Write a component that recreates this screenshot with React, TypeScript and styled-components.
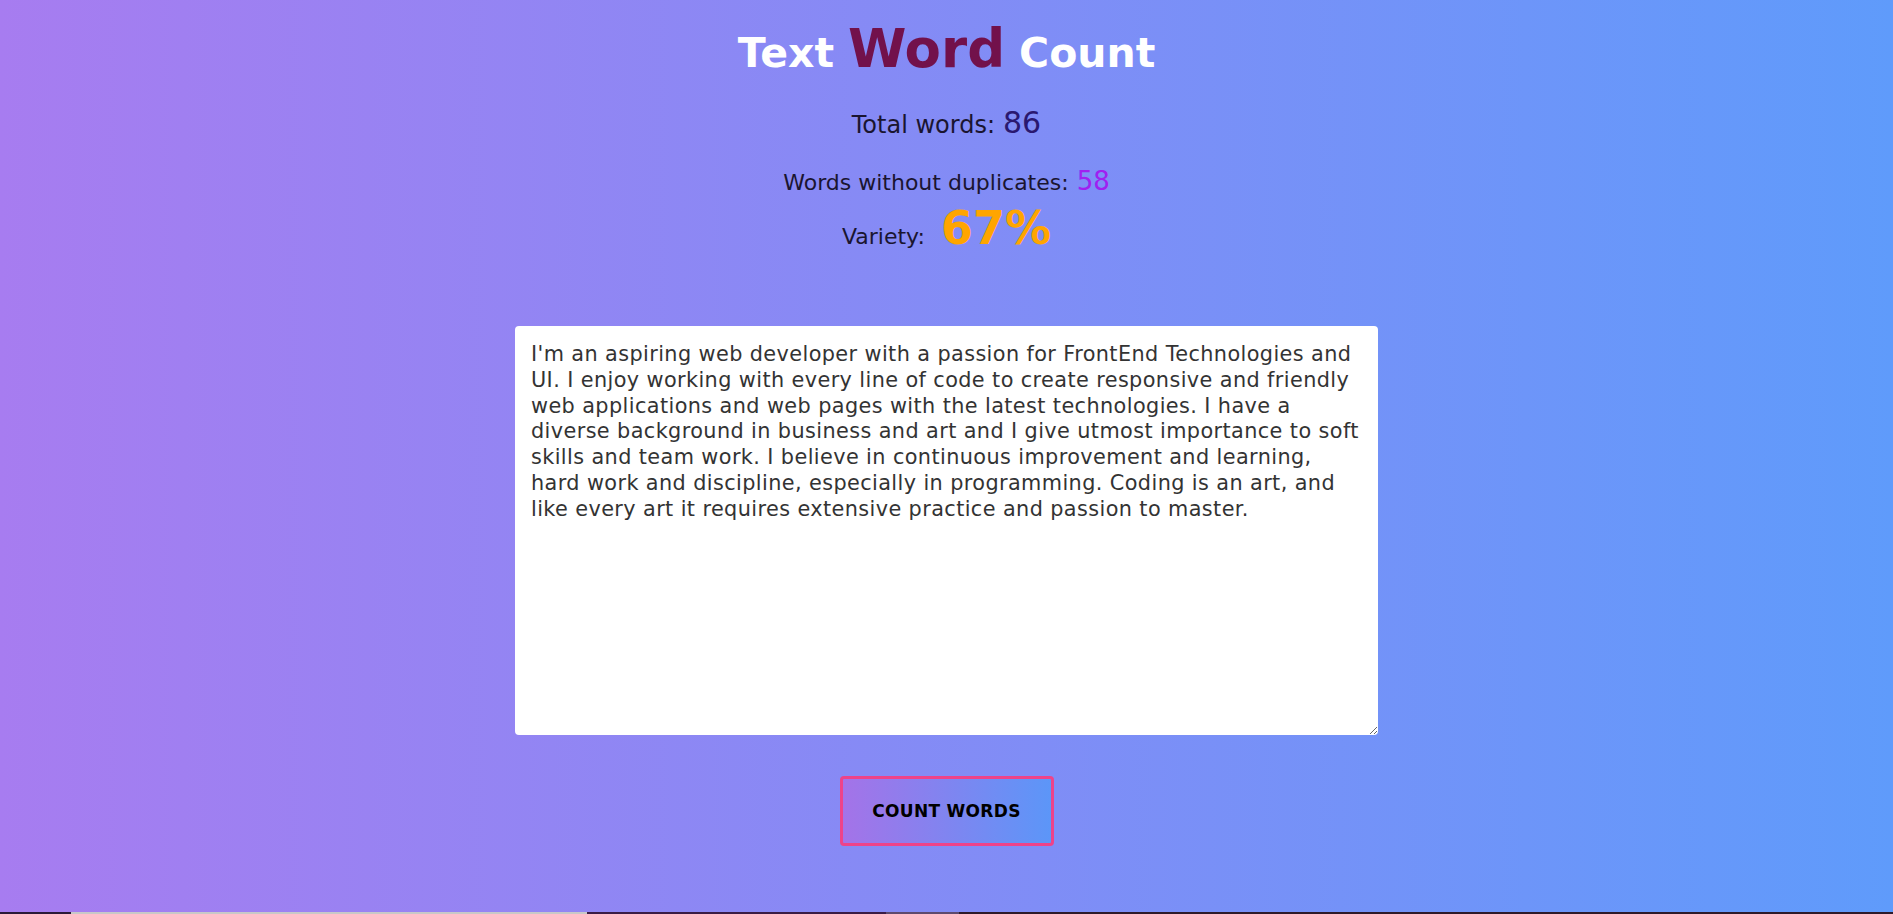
import React, { useState } from "react";
import styled, { createGlobalStyle } from "styled-components";

const GlobalStyle = createGlobalStyle`
  * { box-sizing: border-box; }
  html, body {
    margin: 0;
    padding: 0;
  }
  body {
    font-family: "DejaVu Sans", "Noto Sans", sans-serif;
    background: linear-gradient(to right, #a77cf0, #5f9bfb);
    min-height: 100vh;
    overflow: hidden;
  }
`;

const Page = styled.main`
  min-height: 100vh;
  display: flex;
  flex-direction: column;
  align-items: center;
  padding-top: 15px;
`;

const Title = styled.h1`
  margin: 0;
  font-size: 41px;
  font-weight: 700;
  color: #fff;
  line-height: 67px;
  display: flex;
  align-items: baseline;
  gap: 14px;
`;

const Accent = styled.span`
  font-size: 53px;
  color: #72114b;
`;

const StatRow = styled.p<{ $top: number; $size: number }>`
  margin: ${(p) => p.$top}px 0 0;
  display: flex;
  align-items: baseline;
  color: #1a1530;
  font-size: ${(p) => p.$size}px;
`;

const Value = styled.span<{ $color: string; $size: number; $bold?: boolean }>`
  margin-left: ${(p) => (p.$bold ? 16 : 8)}px;
  color: ${(p) => p.$color};
  font-size: ${(p) => p.$size}px;
  font-weight: ${(p) => (p.$bold ? 700 : 400)};
`;

const TextBox = styled.textarea`
  margin-top: 71px;
  width: 863px;
  height: 409px;
  border: none;
  border-radius: 4px;
  padding: 16px 4px 16px 16px;
  background: #fff;
  color: #333;
  font-family: "DejaVu Sans", "Noto Sans", sans-serif;
  font-size: 20.8px;
  letter-spacing: 0.4px;
  line-height: 25.8px;
  outline: none;
`;

const CountButton = styled.button`
  margin-top: 41px;
  width: 214px;
  height: 70px;
  border: 3px solid #ee4389;
  border-radius: 4px;
  background: linear-gradient(to right, #a473e8, #5c96f8);
  color: #000;
  font-family: "DejaVu Sans", "Noto Sans", sans-serif;
  font-weight: 700;
  font-size: 17px;
  letter-spacing: 0.3px;
  cursor: pointer;
`;

const Strip = styled.div`
  position: fixed;
  left: 0;
  right: 0;
  bottom: 0;
  height: 2px;
  display: flex;
`;

const Segment = styled.div<{ $w: number | "rest"; $c: string }>`
  background: ${(p) => p.$c};
  ${(p) => (p.$w === "rest" ? "flex: 1;" : `width: ${p.$w}px;`)}
`;

const initialText = [
  "I'm an aspiring web developer with a passion for FrontEnd Technologies and",
  "UI. I enjoy working with every line of code to create responsive and friendly",
  "web applications and web pages with the latest technologies. I have a",
  "diverse background in business and art and I give utmost importance to soft",
  "skills and team work. I believe in continuous improvement and learning,",
  "hard work and discipline, especially in programming. Coding is an art, and",
  "like every art it requires extensive practice and passion to master.",
].join("\n");

function countStats(text: string) {
  const words = text.trim().split(/\s+/).filter(Boolean);
  const unique = new Set(words.map((w) => w.toLowerCase().replace(/[.,!?]/g, "")));
  const total = words.length;
  return {
    total,
    unique: unique.size,
    variety: total ? Math.round((unique.size / total) * 100) : 0,
  };
}

export default function App() {
  const [text, setText] = useState(initialText);
  const [stats, setStats] = useState({ total: 86, unique: 58, variety: 67 });

  return (
    <>
      <GlobalStyle />
      <Page>
        <Title>
          <span>Text</span>
          <Accent>Word</Accent>
          <span>Count</span>
        </Title>
        <StatRow $top={18} $size={24}>
          Total words:
          <Value $color="#2a1870" $size={30}>
            {stats.total}
          </Value>
        </StatRow>
        <StatRow $top={26} $size={22}>
          Words without duplicates:
          <Value $color="#a020f0" $size={26}>
            {stats.unique}
          </Value>
        </StatRow>
        <StatRow $top={5} $size={22}>
          Variety:
          <Value $color="#ffa500" $size={46} $bold>
            {stats.variety}%
          </Value>
        </StatRow>
        <TextBox value={text} onChange={(e) => setText(e.target.value)} />
        <CountButton onClick={() => setStats(countStats(text))}>COUNT WORDS</CountButton>
      </Page>
      <Strip>
        <Segment $w={71} $c="#2b1a38" />
        <Segment $w={516} $c="#c8c8c8" />
        <Segment $w={299} $c="#3a1c45" />
        <Segment $w={73} $c="#5e4a6e" />
        <Segment $w="rest" $c="#2e1a2a" />
      </Strip>
    </>
  );
}
